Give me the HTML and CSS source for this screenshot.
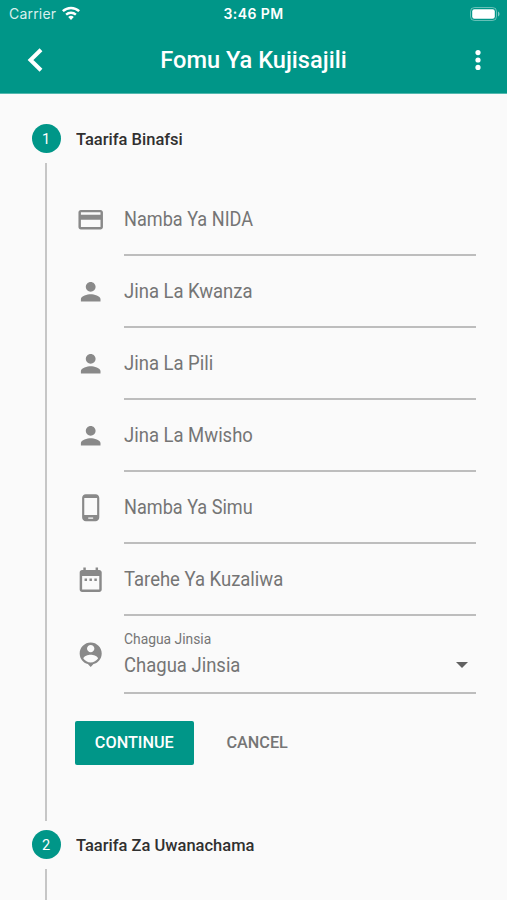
FILE: index.html
```html
<!DOCTYPE html>
<html lang="sw">
<head>
<meta charset="utf-8">
<title>Fomu Ya Kujisajili</title>
<link rel="stylesheet" href="styles.css">
</head>
<body>
<header class="header">
  <div class="status">
    <div class="carrier"><span>Carrier</span>
      <svg class="wifi" viewBox="0 0 18 14"><path d="M9 14l2.8-3.1a4.2 4.2 0 0 0-5.6 0zM4.9 9.5a6.1 6.1 0 0 1 8.2 0l1.6-1.8a8.4 8.4 0 0 0-11.4 0zM1.7 6a10.8 10.8 0 0 1 14.6 0L18 4.2a13.2 13.2 0 0 0-18 0z"/></svg>
    </div>
    <span class="clock">3:46 PM</span>
    <svg class="battery" viewBox="0 0 30 14"><rect x=".5" y=".5" width="26" height="13" rx="4" fill="none" stroke="#fff" stroke-opacity=".4"/><rect x="2.2" y="2.2" width="22.6" height="9.6" rx="2.2"/><path d="M28 4.5v5c2-.8 2-4.2 0-5z" opacity=".5"/></svg>
  </div>
  <div class="appbar">
    <svg class="back" viewBox="0 0 16 24"><path d="M14 1.7L3.5 12 14 22.3" fill="none" stroke="#fff" stroke-width="4"/></svg>
    <h1 class="title">Fomu Ya Kujisajili</h1>
    <svg class="more" viewBox="0 0 6 20"><circle cx="3" cy="2.6" r="2.6"/><circle cx="3" cy="10" r="2.6"/><circle cx="3" cy="17.4" r="2.6"/></svg>
  </div>
</header>
<main class="stepper">
  <section class="step">
    <div class="rail"><span class="badge">1</span><span class="line"></span></div>
    <div class="content">
      <h2 class="step-title">Taarifa Binafsi</h2>
      <form class="form">
        <div class="row"><svg class="icon" viewBox="0 0 24 24"><path d="M20 4H4c-1.110 0-1.990.89-1.990 2L2 18c0 1.110.89 2 2 2h16c1.110 0 2-.89 2-2V6c0-1.110-.89-2-2-2zm0 14H4v-6h16v6zm0-10H4V6h16v2z"/></svg><div class="field"><span class="label tight">Namba Ya NIDA</span></div></div>
        <div class="row"><svg class="icon" viewBox="0 0 24 24"><path d="M12 12c2.210 0 4-1.790 4-4s-1.790-4-4-4-4 1.790-4 4 1.790 4 4 4zm0 2c-2.670 0-8 1.340-8 4v2h16v-2c0-2.660-5.330-4-8-4z"/></svg><div class="field"><span class="label">Jina La Kwanza</span></div></div>
        <div class="row"><svg class="icon" viewBox="0 0 24 24"><path d="M12 12c2.210 0 4-1.790 4-4s-1.790-4-4-4-4 1.790-4 4 1.790 4 4 4zm0 2c-2.670 0-8 1.340-8 4v2h16v-2c0-2.660-5.330-4-8-4z"/></svg><div class="field"><span class="label">Jina La Pili</span></div></div>
        <div class="row"><svg class="icon" viewBox="0 0 24 24"><path d="M12 12c2.210 0 4-1.790 4-4s-1.790-4-4-4-4 1.790-4 4 1.790 4 4 4zm0 2c-2.670 0-8 1.340-8 4v2h16v-2c0-2.660-5.330-4-8-4z"/></svg><div class="field"><span class="label">Jina La Mwisho</span></div></div>
        <div class="row"><svg class="icon" viewBox="0 0 24 24"><path d="M16 1H8C6.340 1 5 2.340 5 4v16c0 1.660 1.340 3 3 3h8c1.660 0 3-1.340 3-3V4c0-1.660-1.340-3-3-3zm-2 20h-4v-1h4v1zm3.250-3H6.750V4h10.500v14z"/></svg><div class="field"><span class="label tight">Namba Ya Simu</span></div></div>
        <div class="row"><svg class="icon" viewBox="0 0 24 24"><path d="M9 11H7v2h2v-2zm4 0h-2v2h2v-2zm4 0h-2v2h2v-2zm2-7h-1V2h-2v2H8V2H6v2H5c-1.110 0-1.990.9-1.990 2L3 20c0 1.100.89 2 2 2h14c1.100 0 2-.9 2-2V6c0-1.100-.9-2-2-2zm0 16H5V9h14v11z"/></svg><div class="field"><span class="label">Tarehe Ya Kuzaliwa</span></div></div>
        <div class="row select"><svg class="icon" viewBox="0 0 24 24"><path d="M12 2c-4.970 0-9 4.030-9 9 0 4.170 2.840 7.670 6.690 8.690L12 22l2.310-2.310C18.160 18.670 21 15.170 21 11c0-4.970-4.030-9-9-9zm0 2c1.660 0 3 1.340 3 3s-1.340 3-3 3-3-1.340-3-3 1.340-3 3-3zm0 14.300c-2.500 0-4.710-1.280-6-3.220.03-1.990 4-3.080 6-3.080 1.990 0 5.970 1.090 6 3.080-1.290 1.940-3.500 3.220-6 3.220z"/></svg>
          <div class="field"><div class="stack"><span class="label small">Chagua Jinsia</span><span class="label">Chagua Jinsia</span></div><svg class="caret" viewBox="0 0 12 6"><path d="M0 0h12L6 6z"/></svg></div></div>
        <div class="actions"><button type="button" class="continue"><span>CONTINUE</span></button><button type="button" class="cancel"><span>CANCEL</span></button></div>
      </form>
    </div>
  </section>
  <section class="step">
    <div class="rail"><span class="badge">2</span><span class="line"></span></div>
    <div class="content"><h2 class="step-title">Taarifa Za Uwanachama</h2></div>
  </section>
</main>
</body>
</html>
```
FILE: styles.css
```css
* { box-sizing: border-box; }
body { margin: 0; height: 900px; overflow: hidden; background: #fafafa; font-family: Roboto, "Liberation Sans", sans-serif; color: #757575; }
.header { height: 94px; background: #009688; color: #fff; border-bottom: 1px solid #53b8ae; }
.header svg { fill: #fff; }
.status { height: 27px; display: grid; grid-template-columns: 1fr auto 1fr; align-items: center; padding: 0 7px 0 9px; }
.carrier { display: flex; align-items: center; gap: 6px; font-family: Inter, sans-serif; font-size: 14px; letter-spacing: .2px; color: #d9efed; }
.wifi { width: 18px; height: 14px; margin-top: -2px; }
.clock { font-family: Inter, sans-serif; font-weight: 600; font-size: 14px; letter-spacing: .4px; margin-right: 2px; }
.battery { width: 30px; height: 14px; justify-self: end; }
.appbar { height: 65px; display: grid; grid-template-columns: 80px 1fr 80px; align-items: center; }
.back { width: 16px; height: 24px; margin-left: 27px; }
.title { margin: 0; text-align: center; font-size: 24.5px; font-weight: 500; white-space: nowrap; transform: scaleX(.963); }
.more { width: 6px; height: 20px; justify-self: end; margin-right: 26px; }
.stepper { padding: 0 31px; }
.step { display: flex; gap: 15px; }
.rail { width: 30px; display: flex; flex-direction: column; align-items: center; padding-top: 30px; }
.badge { width: 29px; height: 29px; border-radius: 50%; background: #009688; color: #fff; display: grid; place-items: center; font-size: 14.5px; padding-top: 1px; flex: none; }
.line { width: 2px; flex: 1; margin: 10px 0 -21px; background: #c6c6c6; }
.content { flex: 1; }
.step-title { margin: 0; height: 89px; line-height: 90px; font-size: 17px; font-weight: 500; color: #303030; white-space: nowrap; transform: scaleX(.97); transform-origin: left; }
.form { height: 617px; padding-top: 1px; }
.row { height: 72px; display: flex; align-items: center; gap: 19px; }
.icon { width: 29.4px; height: 29.4px; margin: -1px 0 0 -.5px; fill: #898989; flex: none; }
.field { flex: 1; height: 100%; border-bottom: 2px solid #bdbdbd; display: flex; align-items: center; justify-content: space-between; font-size: 19.6px; white-space: nowrap; }
.row .field { margin-left: .5px; }
.label { transform: scaleX(.943); transform-origin: left; }
.label.tight { transform: scaleX(.924); }
.row.select { height: 78px; }
.stack { display: flex; flex-direction: column; line-height: 24px; }
.stack .small { font-size: 14.7px; line-height: 23px; margin-top: -3px; padding-bottom: 3px; }
.caret { width: 12px; height: 6px; fill: #616161; margin: 21px 8.5px 0 0; }
.actions { display: flex; padding-top: 26.500px; gap: 12px; }
.actions button { border: 0; height: 44px; font: 500 17px Roboto, sans-serif; border-radius: 2px; padding: 0 0 1px; }
.actions span { display: inline-block; transform: scaleX(.955); }
.actions .continue { width: 119px; margin-left: -1px; background: #009688; color: #fff; }
.actions .cancel { width: 102px; background: none; color: #757575; }
.step + .step .line { height: 60px; flex: none; margin-bottom: 0; }
```
